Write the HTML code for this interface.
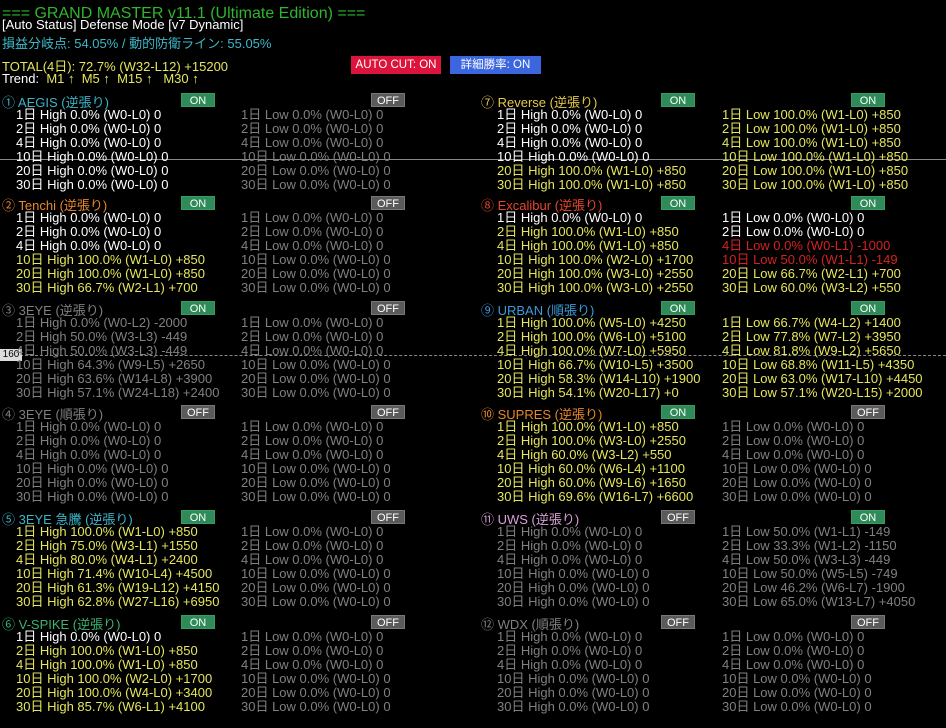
<!DOCTYPE html>
<html><head><meta charset="utf-8"><style>
body{margin:0;width:946px;height:728px;background:#000;overflow:hidden;position:relative;font-family:"Liberation Sans","Noto Sans CJK JP",sans-serif;font-size:13px;}
.a{position:absolute;white-space:nowrap;line-height:14px}
.p{position:absolute;width:465px;height:100px}
.t{position:absolute;left:2px;top:0;line-height:14px;white-space:nowrap;font-size:13px}
.R2 .t{left:0}
.c{position:absolute;top:12px;line-height:14px;white-space:nowrap}
.h{left:16px}.l{left:241px}
.b{position:absolute;top:-3px;width:34px;height:14px;font-size:11px;line-height:14px;text-align:center;color:#fff;box-sizing:border-box}
.on{background:#2e8b57;border:1px solid #3a9a66}
.off{background:#5a5a5a;border:1px solid #777}
.b1{left:181px}.b2{left:371px}
.R2 .b1{left:180px}.R2 .b2{left:370px}
.W{color:#fff}.Y{color:#e6e65c}.G{color:#808080}.R{color:#d42222}
</style></head><body>
<div class="a" style="left:2px;top:5px;font-size:16px;line-height:18px;color:#2fb52f">=== GRAND MASTER v11.1 (Ultimate Edition) ===</div>
<div class="a W" style="left:2px;top:18px;font-size:13px">[Auto Status] Defense Mode [v7 Dynamic]</div>
<div class="a" style="left:2px;top:37px;color:#3cb8c8">損益分岐点: 54.05% / 動的防衛ライン: 55.05%</div>
<div class="a Y" style="left:2px;top:60px;font-size:13px">TOTAL(4日): 72.7% (W32-L12) +15200</div>
<div class="a" style="left:2px;top:72px"><span class="W">Trend: </span><span class="Y">&nbsp;M1 ↑&nbsp; M5 ↑&nbsp; M15 ↑&nbsp;&nbsp; M30 ↑</span></div>
<div class="a" style="left:351px;top:56px;width:90px;height:18px;background:#dc143c;color:#fff;font-size:11.5px;line-height:18px;text-align:center">AUTO CUT: ON</div>
<div class="a" style="left:450px;top:56px;width:91px;height:18px;background:#3b66dd;color:#fff;font-size:11.5px;line-height:18px;text-align:center">詳細勝率: ON</div>
<div class="a" style="left:0;top:159px;width:946px;height:1px;background:#888"></div>
<div class="a" style="left:0;top:355px;width:946px;height:0;border-top:1px dashed #888"></div>
<div class="a" style="left:0;top:349px;width:22px;height:12px;background:#ddd;color:#000;font-size:10px;line-height:12px;text-align:center">160</div>

<!-- LEFT -->
<div class="p" style="left:0;top:96px"><div class="t" style="color:#3cb4c8">① AEGIS (逆張り)</div><div class="b b1 on">ON</div><div class="b b2 off">OFF</div>
<div class="c h W">1日 High 0.0% (W0-L0) 0<br>2日 High 0.0% (W0-L0) 0<br>4日 High 0.0% (W0-L0) 0<br>10日 High 0.0% (W0-L0) 0<br>20日 High 0.0% (W0-L0) 0<br>30日 High 0.0% (W0-L0) 0</div>
<div class="c l G">1日 Low 0.0% (W0-L0) 0<br>2日 Low 0.0% (W0-L0) 0<br>4日 Low 0.0% (W0-L0) 0<br>10日 Low 0.0% (W0-L0) 0<br>20日 Low 0.0% (W0-L0) 0<br>30日 Low 0.0% (W0-L0) 0</div></div>

<div class="p" style="left:0;top:199px"><div class="t" style="color:#e8862a">② Tenchi (逆張り)</div><div class="b b1 on">ON</div><div class="b b2 off">OFF</div>
<div class="c h"><span class="W">1日 High 0.0% (W0-L0) 0<br>2日 High 0.0% (W0-L0) 0<br>4日 High 0.0% (W0-L0) 0</span><br><span class="Y">10日 High 100.0% (W1-L0) +850<br>20日 High 100.0% (W1-L0) +850<br>30日 High 66.7% (W2-L1) +700</span></div>
<div class="c l G">1日 Low 0.0% (W0-L0) 0<br>2日 Low 0.0% (W0-L0) 0<br>4日 Low 0.0% (W0-L0) 0<br>10日 Low 0.0% (W0-L0) 0<br>20日 Low 0.0% (W0-L0) 0<br>30日 Low 0.0% (W0-L0) 0</div></div>

<div class="p" style="left:0;top:304px"><div class="t G">③ 3EYE (逆張り)</div><div class="b b1 on">ON</div><div class="b b2 off">OFF</div>
<div class="c h G">1日 High 0.0% (W0-L2) -2000<br>2日 High 50.0% (W3-L3) -449<br>4日 High 50.0% (W3-L3) -449<br>10日 High 64.3% (W9-L5) +2650<br>20日 High 63.6% (W14-L8) +3900<br>30日 High 57.1% (W24-L18) +2400</div>
<div class="c l G">1日 Low 0.0% (W0-L0) 0<br>2日 Low 0.0% (W0-L0) 0<br>4日 Low 0.0% (W0-L0) 0<br>10日 Low 0.0% (W0-L0) 0<br>20日 Low 0.0% (W0-L0) 0<br>30日 Low 0.0% (W0-L0) 0</div></div>

<div class="p" style="left:0;top:408px"><div class="t G">④ 3EYE (順張り)</div><div class="b b1 off">OFF</div><div class="b b2 off">OFF</div>
<div class="c h G">1日 High 0.0% (W0-L0) 0<br>2日 High 0.0% (W0-L0) 0<br>4日 High 0.0% (W0-L0) 0<br>10日 High 0.0% (W0-L0) 0<br>20日 High 0.0% (W0-L0) 0<br>30日 High 0.0% (W0-L0) 0</div>
<div class="c l G">1日 Low 0.0% (W0-L0) 0<br>2日 Low 0.0% (W0-L0) 0<br>4日 Low 0.0% (W0-L0) 0<br>10日 Low 0.0% (W0-L0) 0<br>20日 Low 0.0% (W0-L0) 0<br>30日 Low 0.0% (W0-L0) 0</div></div>

<div class="p" style="left:0;top:513px"><div class="t" style="color:#3cb4c8">⑤ 3EYE 急騰 (逆張り)</div><div class="b b1 on">ON</div><div class="b b2 off">OFF</div>
<div class="c h Y">1日 High 100.0% (W1-L0) +850<br>2日 High 75.0% (W3-L1) +1550<br>4日 High 80.0% (W4-L1) +2400<br>10日 High 71.4% (W10-L4) +4500<br>20日 High 61.3% (W19-L12) +4150<br>30日 High 62.8% (W27-L16) +6950</div>
<div class="c l G">1日 Low 0.0% (W0-L0) 0<br>2日 Low 0.0% (W0-L0) 0<br>4日 Low 0.0% (W0-L0) 0<br>10日 Low 0.0% (W0-L0) 0<br>20日 Low 0.0% (W0-L0) 0<br>30日 Low 0.0% (W0-L0) 0</div></div>

<div class="p" style="left:0;top:618px"><div class="t" style="color:#3cb371">⑥ V-SPIKE (逆張り)</div><div class="b b1 on">ON</div><div class="b b2 off">OFF</div>
<div class="c h"><span class="W">1日 High 0.0% (W0-L0) 0</span><br><span class="Y">2日 High 100.0% (W1-L0) +850<br>4日 High 100.0% (W1-L0) +850<br>10日 High 100.0% (W2-L0) +1700<br>20日 High 100.0% (W4-L0) +3400<br>30日 High 85.7% (W6-L1) +4100</span></div>
<div class="c l G">1日 Low 0.0% (W0-L0) 0<br>2日 Low 0.0% (W0-L0) 0<br>4日 Low 0.0% (W0-L0) 0<br>10日 Low 0.0% (W0-L0) 0<br>20日 Low 0.0% (W0-L0) 0<br>30日 Low 0.0% (W0-L0) 0</div></div>

<!-- RIGHT -->
<div class="p R2" style="left:481px;top:96px"><div class="t" style="color:#e6c84a">⑦ Reverse (逆張り)</div><div class="b b1 on">ON</div><div class="b b2 on">ON</div>
<div class="c h"><span class="W">1日 High 0.0% (W0-L0) 0<br>2日 High 0.0% (W0-L0) 0<br>4日 High 0.0% (W0-L0) 0<br>10日 High 0.0% (W0-L0) 0</span><br><span class="Y">20日 High 100.0% (W1-L0) +850<br>30日 High 100.0% (W1-L0) +850</span></div>
<div class="c l Y">1日 Low 100.0% (W1-L0) +850<br>2日 Low 100.0% (W1-L0) +850<br>4日 Low 100.0% (W1-L0) +850<br>10日 Low 100.0% (W1-L0) +850<br>20日 Low 100.0% (W1-L0) +850<br>30日 Low 100.0% (W1-L0) +850</div></div>

<div class="p R2" style="left:481px;top:199px"><div class="t" style="color:#e8452a">⑧ Excalibur (逆張り)</div><div class="b b1 on">ON</div><div class="b b2 on">ON</div>
<div class="c h"><span class="W">1日 High 0.0% (W0-L0) 0</span><br><span class="Y">2日 High 100.0% (W1-L0) +850<br>4日 High 100.0% (W1-L0) +850<br>10日 High 100.0% (W2-L0) +1700<br>20日 High 100.0% (W3-L0) +2550<br>30日 High 100.0% (W3-L0) +2550</span></div>
<div class="c l"><span class="W">1日 Low 0.0% (W0-L0) 0<br>2日 Low 0.0% (W0-L0) 0</span><br><span class="R">4日 Low 0.0% (W0-L1) -1000<br>10日 Low 50.0% (W1-L1) -149</span><br><span class="Y">20日 Low 66.7% (W2-L1) +700<br>30日 Low 60.0% (W3-L2) +550</span></div></div>

<div class="p R2" style="left:481px;top:304px"><div class="t" style="color:#3c9ad8">⑨ URBAN (順張り)</div><div class="b b1 on">ON</div><div class="b b2 on">ON</div>
<div class="c h Y">1日 High 100.0% (W5-L0) +4250<br>2日 High 100.0% (W6-L0) +5100<br>4日 High 100.0% (W7-L0) +5950<br>10日 High 66.7% (W10-L5) +3500<br>20日 High 58.3% (W14-L10) +1900<br>30日 High 54.1% (W20-L17) +0</div>
<div class="c l Y">1日 Low 66.7% (W4-L2) +1400<br>2日 Low 77.8% (W7-L2) +3950<br>4日 Low 81.8% (W9-L2) +5650<br>10日 Low 68.8% (W11-L5) +4350<br>20日 Low 63.0% (W17-L10) +4450<br>30日 Low 57.1% (W20-L15) +2000</div></div>

<div class="p R2" style="left:481px;top:408px"><div class="t" style="color:#e8862a">⑩ SUPRES (逆張り)</div><div class="b b1 on">ON</div><div class="b b2 off">OFF</div>
<div class="c h Y">1日 High 100.0% (W1-L0) +850<br>2日 High 100.0% (W3-L0) +2550<br>4日 High 60.0% (W3-L2) +550<br>10日 High 60.0% (W6-L4) +1100<br>20日 High 60.0% (W9-L6) +1650<br>30日 High 69.6% (W16-L7) +6600</div>
<div class="c l G">1日 Low 0.0% (W0-L0) 0<br>2日 Low 0.0% (W0-L0) 0<br>4日 Low 0.0% (W0-L0) 0<br>10日 Low 0.0% (W0-L0) 0<br>20日 Low 0.0% (W0-L0) 0<br>30日 Low 0.0% (W0-L0) 0</div></div>

<div class="p R2" style="left:481px;top:513px"><div class="t" style="color:#d8a0d8">⑪ UWS (逆張り)</div><div class="b b1 off">OFF</div><div class="b b2 on">ON</div>
<div class="c h G">1日 High 0.0% (W0-L0) 0<br>2日 High 0.0% (W0-L0) 0<br>4日 High 0.0% (W0-L0) 0<br>10日 High 0.0% (W0-L0) 0<br>20日 High 0.0% (W0-L0) 0<br>30日 High 0.0% (W0-L0) 0</div>
<div class="c l G">1日 Low 50.0% (W1-L1) -149<br>2日 Low 33.3% (W1-L2) -1150<br>4日 Low 50.0% (W3-L3) -449<br>10日 Low 50.0% (W5-L5) -749<br>20日 Low 46.2% (W6-L7) -1900<br>30日 Low 65.0% (W13-L7) +4050</div></div>

<div class="p R2" style="left:481px;top:618px"><div class="t G">⑫ WDX (順張り)</div><div class="b b1 off">OFF</div><div class="b b2 off">OFF</div>
<div class="c h G">1日 High 0.0% (W0-L0) 0<br>2日 High 0.0% (W0-L0) 0<br>4日 High 0.0% (W0-L0) 0<br>10日 High 0.0% (W0-L0) 0<br>20日 High 0.0% (W0-L0) 0<br>30日 High 0.0% (W0-L0) 0</div>
<div class="c l G">1日 Low 0.0% (W0-L0) 0<br>2日 Low 0.0% (W0-L0) 0<br>4日 Low 0.0% (W0-L0) 0<br>10日 Low 0.0% (W0-L0) 0<br>20日 Low 0.0% (W0-L0) 0<br>30日 Low 0.0% (W0-L0) 0</div></div>
</body></html>
